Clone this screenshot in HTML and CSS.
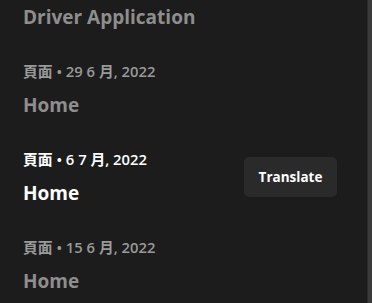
FILE: index.html
```html
<!DOCTYPE html>
<html lang="zh-Hant">
<head>
    <meta charset="UTF-8">
    <title>Driver Application</title>
    <link rel="stylesheet" href="styles.css">
</head>
<body>
    <div class="page">
        <div class="content">
            <h1 class="title">Driver Application</h1>

            <div class="entry">
                <div class="meta">頁面 • 29 6 月, 2022</div>
                <div class="name">Home</div>
            </div>

            <div class="entry active">
                <div class="meta">頁面 • 6 7 月, 2022</div>
                <div class="name">Home</div>
                <button class="translate-btn">Translate</button>
            </div>

            <div class="entry">
                <div class="meta">頁面 • 15 6 月, 2022</div>
                <div class="name">Home</div>
            </div>
        </div>
        <div class="scrollbar"></div>
    </div>
</body>
</html>
```

FILE: styles.css
```css
html, body { margin: 0; padding: 0; height: 100%; }
body { background-color: #1c1c1c; font-family: "Open Sans", "Noto Sans CJK TC", sans-serif; overflow: hidden; }
.page { display: flex; height: 100%; }
.content { flex: 1; padding: 0 0 0 23px; }
.title { margin: 0; padding-top: 4px; font-size: 19px; font-weight: 700; color: #8e8e8e; line-height: 26px; }
.entry { position: relative; height: 88px; }
.entry:first-of-type { margin-top: 31px; }
.meta { font-size: 14.8px; font-weight: 600; color: #999; line-height: 20px; }
.name { font-size: 19px; font-weight: 700; color: #8e8e8e; line-height: 24px; margin-top: 12px; }
.entry.active .meta, .entry.active .name { color: #fff; }
.translate-btn {
    position: absolute;
    left: 221px;
    top: 8px;
    width: 93px;
    height: 40px;
    background-color: #2a2a2a;
    border: none;
    border-radius: 5px;
    color: #fff;
    font-family: "Open Sans", sans-serif;
    font-size: 13.5px;
    font-weight: 700;
}
.scrollbar { width: 4px; background-color: #3a3a3a; border-left: 1px solid #2a2a2a; }
```
